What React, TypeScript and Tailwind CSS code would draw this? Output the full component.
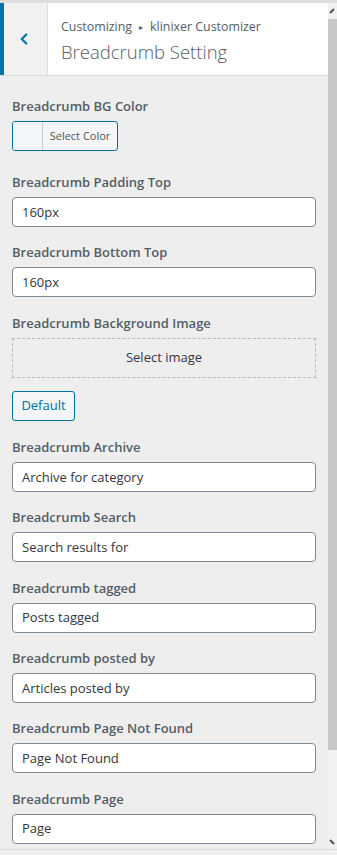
import { ChevronLeft } from "lucide-react";

const fields = [
  { label: "Breadcrumb Archive", value: "Archive for category" },
  { label: "Breadcrumb Search", value: "Search results for" },
  { label: "Breadcrumb tagged", value: "Posts tagged" },
  { label: "Breadcrumb posted by", value: "Articles posted by" },
  { label: "Breadcrumb Page Not Found", value: "Page Not Found" },
  { label: "Breadcrumb Page", value: "Page" },
];

const font = { fontFamily: '"Open Sans", "Noto Sans", sans-serif' };

function Label({ children }: { children: React.ReactNode }) {
  return (
    <div className="h-[20px] leading-[20px] text-[13px] font-semibold text-[#555d66] mb-[5px]">
      {children}
    </div>
  );
}

function TextInput({ value }: { value: string }) {
  return (
    <div className="h-[30px] bg-white border border-[#7e8993] rounded-[4px] px-[9px] pt-[1px] flex items-center text-[13px] text-[#32373c] mb-[15.4px]">
      {value}
    </div>
  );
}

export default function App() {
  return (
    <div className="w-[337px] h-[855px] bg-[#eee] flex flex-col overflow-hidden" style={font}>
      <div className="h-[3px] bg-[#ddd] shrink-0" />
      <div className="flex flex-1 min-h-0">
        <div className="flex-1 flex flex-col min-w-0">
          {/* header */}
          <div className="flex h-[73px] bg-white border-b border-[#ddd] shrink-0">
            <div className="w-[48px] bg-[#f1f1f1] border-l-[4px] border-[#0073aa] border-r border-r-[#ddd] flex items-center justify-center">
              <ChevronLeft className="w-[18px] h-[18px] text-[#0073aa] -ml-[4px]" strokeWidth={3} />
            </div>
            <div className="pl-[13px] pt-[14px]">
              <div className="text-[12.4px] leading-[20px] text-[#555d66] flex items-center gap-[7px]">
                <span>Customizing</span>
                <span className="text-[8px]">▸</span>
                <span>klinixer Customizer</span>
              </div>
              <div className="text-[18.5px] leading-[28px] font-light text-[#555d66] mt-[1px]">
                Breadcrumb Setting
              </div>
            </div>
          </div>

          {/* controls */}
          <div className="px-[12px] pt-[20px]">
            <Label>Breadcrumb BG Color</Label>
            <div className="flex w-[106px] h-[30px] border border-[#0071a1] rounded-[3px] bg-[#f3f5f6] overflow-hidden mt-[1px] mb-[21px]">
              <div className="w-[30px] bg-[#f3f6f8] border-r border-[#ccc]" />
              <div className="flex-1 flex items-center justify-center text-[11px] text-[#555]">Select Color</div>
            </div>

            <Label>Breadcrumb Padding Top</Label>
            <TextInput value="160px" />

            <Label>Breadcrumb Bottom Top</Label>
            <TextInput value="160px" />

            <Label>Breadcrumb Background Image</Label>
            <div className="h-[40px] border border-dashed border-[#b4b9be] flex items-center justify-center text-[13px] text-[#32373c] mb-[13px]">
              Select image
            </div>
            <div className="w-[63px] h-[30px] border border-[#0071a1] rounded-[3px] bg-[#f3f5f6] flex items-center justify-center text-[13px] text-[#0071a1] mb-[16px]">
              Default
            </div>

            {fields.map((f) => (
              <div key={f.label}>
                <Label>{f.label}</Label>
                <TextInput value={f.value} />
              </div>
            ))}
          </div>
        </div>

        {/* scrollbar */}
        <div className="w-[9px] bg-[#f1f1f1] flex flex-col shrink-0">
          <div className="h-[16px] flex items-center justify-center">
            <svg width="7" height="7" viewBox="0 0 7 7"><path d="M1 5 L5 1" stroke="#505050" strokeWidth="2" /></svg>
          </div>
          <div className="h-[731px] bg-[#c8c8c8]" />
          <div className="flex-1 flex items-end justify-center pb-[3px]">
            <svg width="7" height="7" viewBox="0 0 7 7"><path d="M1 1 L5 5" stroke="#505050" strokeWidth="2" /></svg>
          </div>
        </div>
      </div>
      <div className="h-[6px] bg-[#f0f0f0] border-t border-[#ddd] shrink-0" />
    </div>
  );
}
